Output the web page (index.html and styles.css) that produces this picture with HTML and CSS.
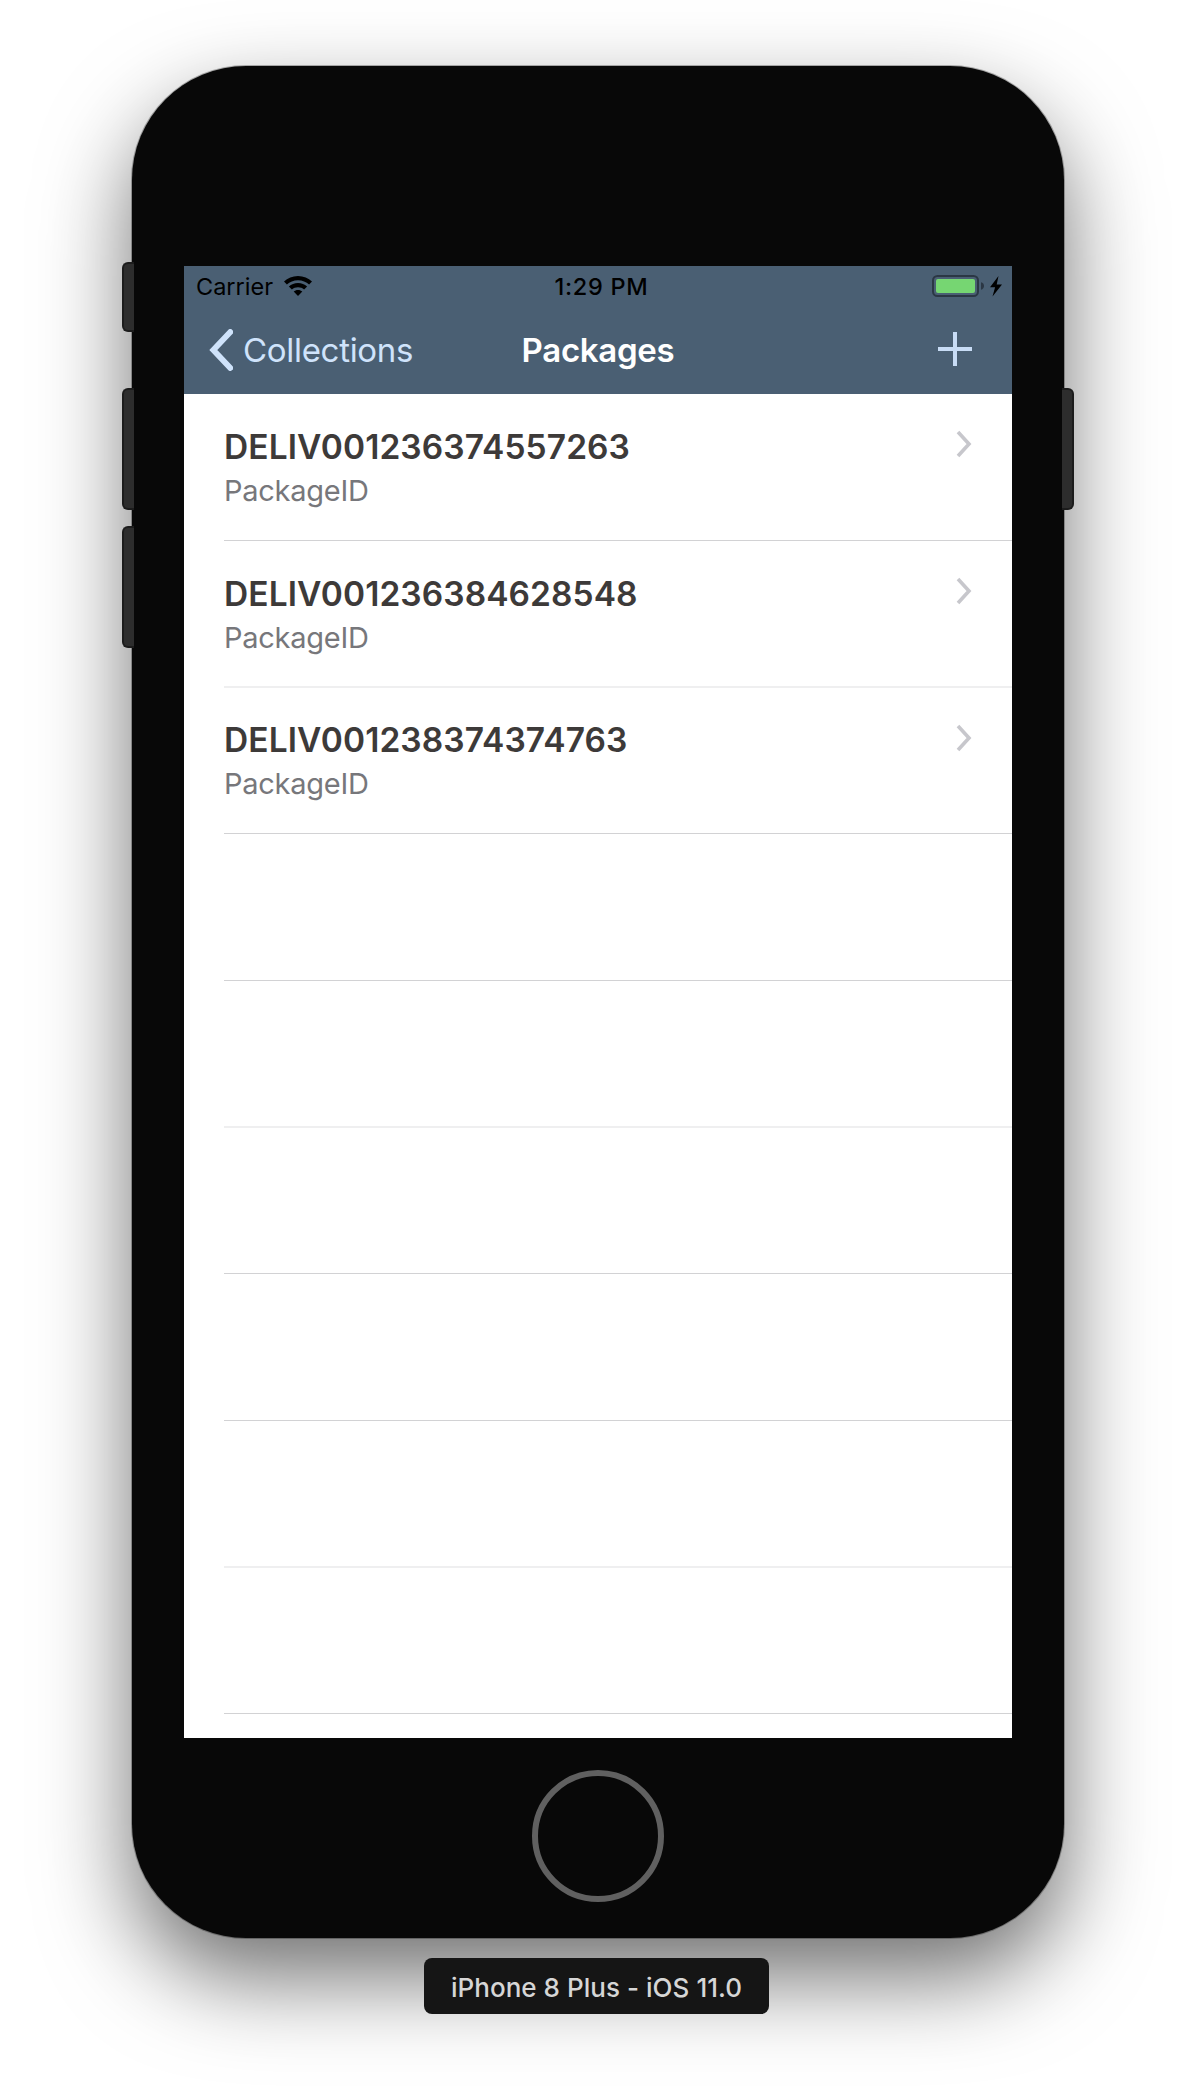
FILE: index.html
```html
<!DOCTYPE html>
<html lang="en">
<head>
<meta charset="utf-8">
<title>Packages</title>
<link rel="stylesheet" href="styles.css">
</head>
<body>
<main class="stage">
  <div class="phone">
    <span class="side-button mute"></span>
    <span class="side-button volume-up"></span>
    <span class="side-button volume-down"></span>
    <span class="side-button power"></span>
    <div class="screen">
      <header class="header">
        <div class="status-bar">
          <div class="status-left">
            <span class="carrier">Carrier</span>
            <svg class="wifi" width="28" height="20" viewBox="0 0 28 20">
              <path d="M14 0C8.500 0 3.600 2.100 0 5.500L2.900 8.600C5.700 5.900 9.600 4.300 14 4.300S22.300 5.900 25.100 8.600L28 5.500C24.400 2.100 19.500 0 14 0Z"/>
              <path d="M14 6.900C10.500 6.900 7.300 8.200 4.900 10.400L7.900 13.500C9.500 12.100 11.600 11.200 14 11.200S18.500 12.100 20.100 13.500L23.100 10.400C20.700 8.200 17.500 6.900 14 6.900Z"/>
              <path d="M14 13.900C12.300 13.900 10.800 14.500 9.700 15.500L14 20L18.300 15.500C17.200 14.500 15.700 13.900 14 13.900Z"/>
            </svg>
          </div>
          <span class="time">1:29 PM</span>
          <div class="status-right">
            <svg width="71" height="22" viewBox="0 0 71 22">
              <rect x="1" y="1" width="45" height="20" rx="4.500" fill="none" stroke="#2b3744" stroke-width="2"/>
              <rect x="4" y="4" width="39" height="14" rx="2" fill="#76d672"/>
              <path d="M49 7.300C53 8 53 14 49 14.700Z" fill="#2b3744"/>
              <path d="M66.500 1L58 12.300H63.100L60.500 21.500L70 9.500H64.700Z"/>
            </svg>
          </div>
        </div>
        <nav class="nav-bar">
          <div class="back">
            <svg width="24" height="42" viewBox="0 0 24 42" fill="none" stroke="#cfe3fb" stroke-width="5.800" stroke-linecap="round" stroke-linejoin="miter"><path d="M21.300 3L4.300 21L21.300 39"/></svg>
            <span class="back-label">Collections</span>
          </div>
          <h1 class="title">Packages</h1>
          <svg class="add" width="34" height="34" viewBox="0 0 34 34" fill="none" stroke="#c8dcf5" stroke-width="4"><path d="M17 0V34M0 17H34"/></svg>
        </nav>
      </header>
      <ul class="list">
        <li class="row">
          <div><div class="package">DELIV001236374557263</div><div class="caption">PackageID</div></div>
          <svg class="chevron" width="16" height="28" viewBox="0 0 16 28"><path d="M2 2L13 14L2 26"/></svg>
        </li>
        <li class="row">
          <div><div class="package">DELIV001236384628548</div><div class="caption">PackageID</div></div>
          <svg class="chevron" width="16" height="28" viewBox="0 0 16 28"><path d="M2 2L13 14L2 26"/></svg>
        </li>
        <li class="row">
          <div><div class="package">DELIV001238374374763</div><div class="caption">PackageID</div></div>
          <svg class="chevron" width="16" height="28" viewBox="0 0 16 28"><path d="M2 2L13 14L2 26"/></svg>
        </li>
        <li class="row"></li>
        <li class="row"></li>
        <li class="row"></li>
        <li class="row"></li>
        <li class="row"></li>
        <li class="row"></li>
      </ul>
    </div>
    <div class="home-button"></div>
  </div>
  <div class="device-label">iPhone 8 Plus - iOS 11.0</div>
</main>
</body>
</html>
```
FILE: styles.css
```css
* { box-sizing: border-box; }
body {
  margin: 0;
  background: #fff;
  font-family: Inter, "Liberation Sans", sans-serif;
}
svg { display: block; flex: none; }
.stage {
  width: 1196px;
  height: 2100px;
  padding-top: 66px;
  overflow: hidden;
  display: flex;
  flex-direction: column;
  align-items: center;
}
.phone {
  position: relative;
  flex: none;
  width: 932px;
  height: 1872px;
  padding-top: 200px;
  border-radius: 114px;
  background: #080808;
  box-shadow: 0 0 0 1px rgba(0, 0, 0, .28), 0 40px 90px rgba(0, 0, 0, .56);
  display: flex;
  flex-direction: column;
  align-items: center;
}
.side-button {
  position: absolute;
  left: -10px;
  width: 12px;
  height: 122px;
  background: #2d2d2d;
  border: 2px solid #1c1c1c;
  border-right: 0;
  border-radius: 6px 0 0 6px;
}
.mute { top: 196px; height: 70px; }
.volume-up { top: 322px; }
.volume-down { top: 460px; }
.power {
  top: 322px;
  left: 930px;
  border: 2px solid #1c1c1c;
  border-left: 0;
  border-radius: 0 6px 6px 0;
}
.screen {
  flex: none;
  width: 828px;
  height: 1472px;
  background: #fff;
  overflow: hidden;
}
.header { background: #4a5f73; height: 128px; }
.status-bar {
  height: 40px;
  padding: 0 9px 0 12px;
  display: grid;
  grid-template-columns: 1fr auto 1fr;
  align-items: center;
  font-size: 23.500px;
  line-height: 38px;
  color: #000;
}
.status-left { display: flex; align-items: center; gap: 12px; }
.carrier { width: 76px; padding-top: 2px; white-space: nowrap; }
.time { font-weight: 500; letter-spacing: .7px; padding: 2px 0 0 4px; }
.status-right { display: flex; justify-content: flex-end; }
.nav-bar {
  height: 88px;
  padding: 0 40px 0 26px;
  display: grid;
  grid-template-columns: 1fr auto 1fr;
  align-items: center;
}
.back { display: flex; align-items: center; gap: 9px; margin-left: -1px; }
.back-label { padding-left: 1px; font-size: 33px; letter-spacing: -.3px; color: #cfe3fb; white-space: nowrap; }
.title { margin: 0; padding-left: 14px; font-size: 33px; font-weight: 600; letter-spacing: -.3px; color: #fff; }
.add { justify-self: end; margin-top: -2px; }
.list { margin: 0; padding: 0 0 0 40px; list-style: none; }
.row {
  height: 147px;
  padding: 33px 40px 0 0;
  border-bottom: 1px solid #d2d2d4;
  display: flex;
  justify-content: space-between;
}
.row:nth-child(3n+2) { border-bottom: 2px solid #efeff0; }
.row:nth-child(3n) { height: 146px; padding-top: 32px; }
.package {
  font-size: 33.500px;
  line-height: 40px;
  font-weight: 600;
  letter-spacing: .08px;
  color: #3d3a39;
}
.caption {
  margin-top: 5px;
  font-size: 29px;
  line-height: 38px;
  letter-spacing: -.25px;
  color: #77777b;
}
.chevron { margin-top: 3px; fill: none; stroke: #c7c7cc; stroke-width: 3.600; }
.row:nth-child(3n) .chevron { margin-top: 4px; }
.home-button {
  flex: none;
  margin-top: 32px;
  width: 132px;
  height: 132px;
  border: 6px solid #606060;
  border-radius: 50%;
}
/* Stacked above the phone's drop shadow. */
.device-label {
  position: relative;
  flex: none;
  margin-top: 20px;
  margin-right: 3px;
  width: 345px;
  height: 56px;
  border-radius: 8px;
  background: #151515;
  color: #d6d6d6;
  font-size: 26px;
  font-weight: 500;
  line-height: 60px;
  letter-spacing: .04px;
  text-align: center;
  white-space: nowrap;
}
```
